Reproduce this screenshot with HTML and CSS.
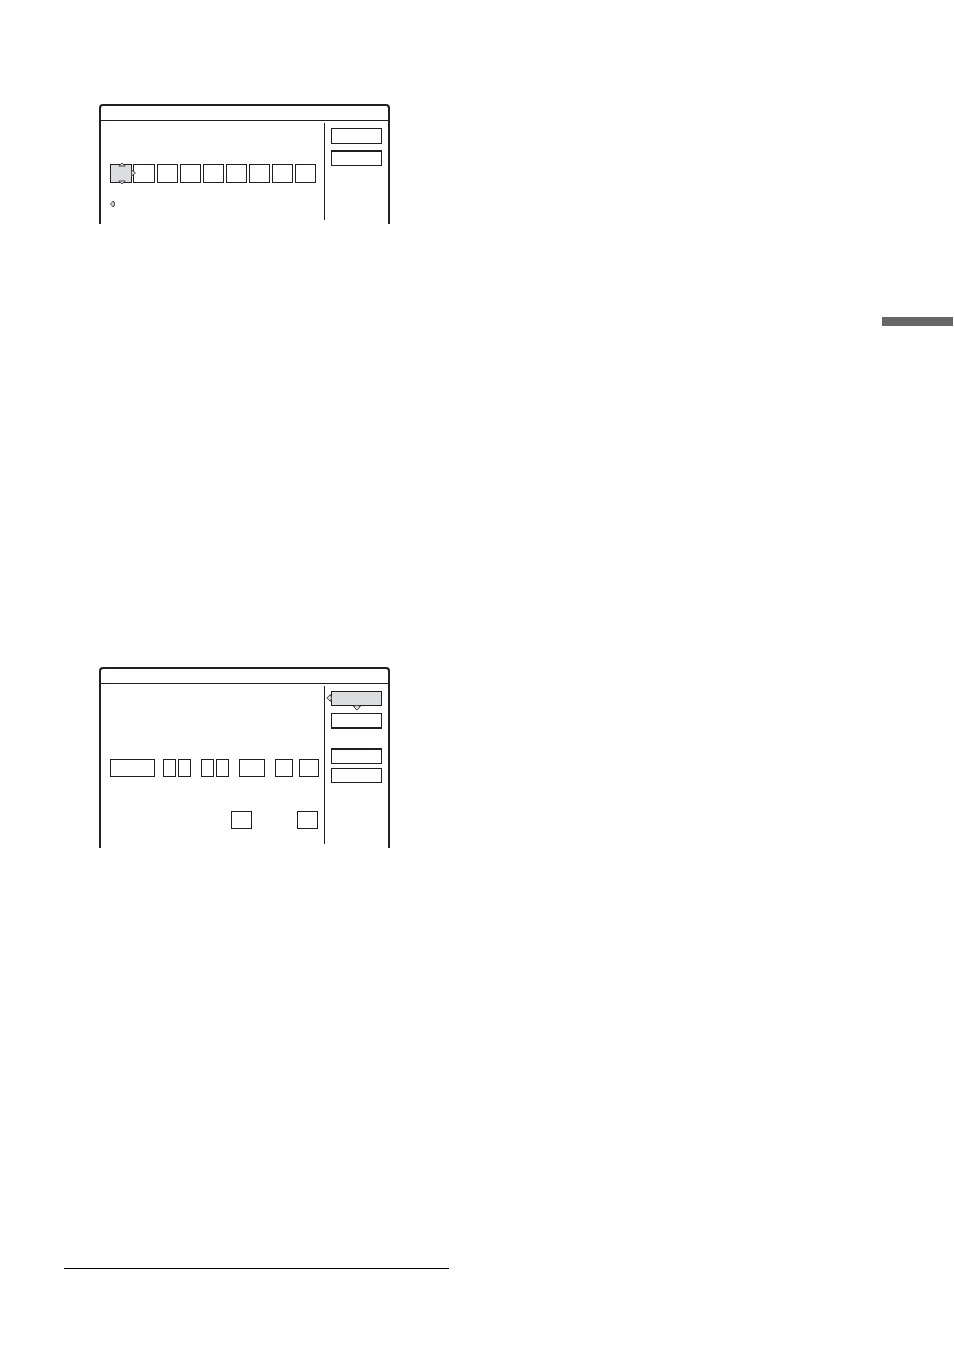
FILE: index.html
```html
<!DOCTYPE html>
<html lang="en">
<head>
    <meta charset="utf-8">
    <title>Setup screens</title>
    <link rel="stylesheet" href="styles.css">
</head>
<body>
<main class="page">
    <div class="screens">
        <!-- channel / title entry -->
        <section class="screen">
            <header class="screen-title"></header>
            <div class="screen-body">
                <div class="content entry">
                    <div class="row letters">
                        <div class="box letter first selected">
                            <svg class="arrow up" width="8" height="5" viewBox="0 0 8 5"><path d="M.8 4 L4 1 L7.2 4 Z"/></svg>
                            <svg class="arrow right" width="5" height="8" viewBox="0 0 5 8"><path d="M.5 .8 L4.4 4 L.5 7.2 Z"/></svg>
                            <svg class="arrow down" width="8" height="5" viewBox="0 0 8 5"><path d="M.8 1 L4 4 L7.2 1 Z"/></svg>
                        </div>
                        <div class="box letter second"></div>
                        <div class="box letter"></div>
                        <div class="box letter"></div>
                        <div class="box letter"></div>
                        <div class="box letter"></div>
                        <div class="box letter"></div>
                        <div class="box letter"></div>
                        <div class="box letter"></div>
                    </div>
                    <svg class="hint" width="5" height="8" viewBox="0 0 5 8"><path d="M3.4 1 L.4 4 L3.4 7 V5.8 H4.4 V2.2 H3.4 Z"/></svg>
                </div>
                <aside class="side">
                    <button type="button" class="btn" aria-label="Option 1"></button>
                    <button type="button" class="btn thick-top" aria-label="Option 2"></button>
                </aside>
            </div>
        </section>

        <!-- timer -->
        <section class="screen">
            <header class="screen-title"></header>
            <div class="screen-body">
                <div class="content timer">
                    <div class="row fields">
                        <div class="box date"></div>
                        <div class="pair">
                            <div class="box digit"></div>
                            <div class="box digit"></div>
                        </div>
                        <div class="pair">
                            <div class="box digit"></div>
                            <div class="box digit"></div>
                        </div>
                        <div class="box channel"></div>
                        <div class="box mode"></div>
                        <div class="box vps"></div>
                    </div>
                    <div class="row totals">
                        <div class="box"></div>
                        <div class="box"></div>
                    </div>
                </div>
                <aside class="side side-timer">
                    <button type="button" class="btn short selected" aria-label="Option 1">
                        <svg class="arrow left" width="6" height="8" viewBox="0 0 6 8"><path d="M4.4 .6 L.8 4 L4.4 7.4 V6 H5.6 V2 H4.4 Z"/></svg>
                        <svg class="arrow below" width="8" height="6" viewBox="0 0 8 6"><path d="M.6 1.4 L4 5.2 L7.4 1.4 H6 V.4 H2 V1.4 Z"/></svg>
                    </button>
                    <button type="button" class="btn thick-bottom" aria-label="Option 2"></button>
                    <button type="button" class="btn thick-top group" aria-label="Option 3"></button>
                    <button type="button" class="btn short" aria-label="Option 4"></button>
                </aside>
            </div>
        </section>
        <hr class="rule">
    </div>
    <div class="tab"></div>
</main>
</body>
</html>
```

FILE: styles.css
```css
* {
    box-sizing: border-box;
}
body {
    margin: 0;
    background: #fff;
    font-family: "Liberation Sans", Arial, sans-serif;
}
.page {
    display: flex;
    justify-content: space-between;
    padding: 104px 1px 80px 64px;
}
.screens {
    width: 385px;
}

/* screens */
.screen {
    width: 291px;
    margin-left: 35px;
    border: 2px solid #231f20;
    border-bottom: 0;
    border-radius: 4px 4px 0 0;
}
.screen + .screen {
    margin-top: 443px;
}
.screen-title {
    height: 15px;
    border-bottom: 1px solid #231f20;
}
.screen-body {
    display: flex;
    padding: 2px 0 4px;
}
.content {
    width: 224px;
    padding-left: 9px;
    border-right: 1px solid #231f20;
}
.row {
    display: flex;
}
.box {
    position: relative;
    height: 18px;
    border: 1px solid #231f20;
}
.selected {
    background: #dcddde;
}

/* entry screen */
.entry {
    padding-top: 41px;
    padding-bottom: 12px;
}
.letters {
    gap: 2px;
}
.letter {
    width: 21px;
    height: 19px;
}
.first,
.second {
    width: 22px;
}
.first {
    z-index: 1;
    margin-right: -1px;
}
.hint {
    display: block;
    margin-top: 17px;
}

/* timer screen */
.timer {
    padding-top: 73px;
    padding-bottom: 15px;
}
.fields {
    gap: 10px;
}
.pair {
    display: flex;
    gap: 2px;
}
.date {
    width: 45px;
    margin-right: -2px;
}
.digit {
    width: 13px;
}
.channel {
    width: 26px;
}
.mode {
    width: 18px;
    margin-right: -4px;
}
.vps {
    width: 20px;
}
.totals {
    gap: 45px;
    margin-top: 34px;
    padding-left: 121px;
}
.totals .box {
    width: 21px;
}

/* side menu */
.side {
    display: flex;
    flex-direction: column;
    flex: 1;
    gap: 6px;
    padding: 5px 6px 0;
}
.btn {
    position: relative;
    height: 16px;
    padding: 0;
    border: 1px solid #231f20;
    border-radius: 0;
    background: #fff;
}
.btn.short {
    height: 15px;
}
.btn.selected {
    margin-bottom: 3px;
    background: #dcddde;
}
.thick-top {
    border-top-width: 2px;
}
.thick-bottom {
    border-bottom-width: 2px;
}
.side-timer {
    gap: 4px;
}
.group {
    margin-top: 15px;
}

/* cursor arrows */
svg path {
    fill: #dcddde;
    stroke: #4a4748;
    stroke-width: 1;
}
.arrow {
    position: absolute;
}
.up {
    top: -3px;
    left: 7px;
}
.down {
    bottom: -3px;
    left: 7px;
}
.right {
    top: 4px;
    right: -5px;
}
.left {
    top: 2px;
    left: -6px;
}
.below {
    bottom: -6px;
    left: 21px;
}

.rule {
    height: 1px;
    margin: 420px 0 0;
    border: 0;
    background: #000;
}
.tab {
    width: 71px;
    height: 9px;
    margin-top: 213px;
    background: #666;
}
```
